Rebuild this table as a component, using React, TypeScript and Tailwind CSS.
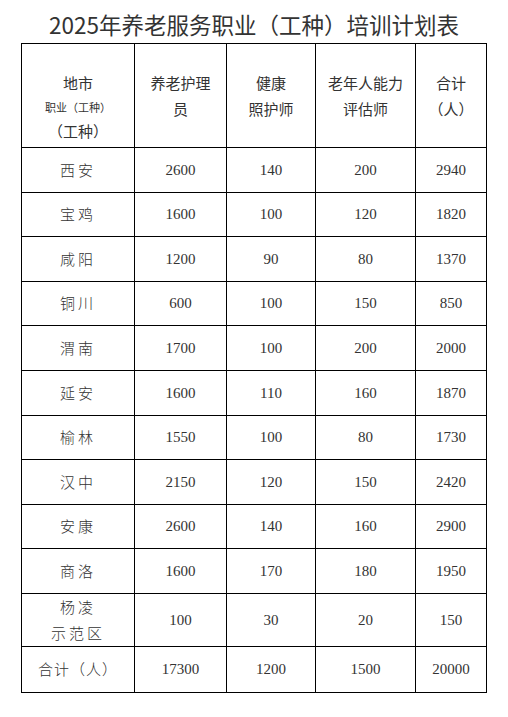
import React from "react";

const rows: [string, string, string, string, string][] = [
  ["西安", "2600", "140", "200", "2940"],
  ["宝鸡", "1600", "100", "120", "1820"],
  ["咸阳", "1200", "90", "80", "1370"],
  ["铜川", "600", "100", "150", "850"],
  ["渭南", "1700", "100", "200", "2000"],
  ["延安", "1600", "110", "160", "1870"],
  ["榆林", "1550", "100", "80", "1730"],
  ["汉中", "2150", "120", "150", "2420"],
  ["安康", "2600", "140", "160", "2900"],
  ["商洛", "1600", "170", "180", "1950"],
];

const serif = "font-['Liberation_Serif','Noto_Sans_CJK_SC',serif]";
const sans = "font-['Noto_Sans_CJK_SC','Noto_Sans',sans-serif]";
const cjk = "font-['Noto_Sans_CJK_SC',sans-serif] font-light";

export default function App() {
  return (
    <div className="w-[508px] h-[717px] bg-white text-[#333]">
      <h1 className={`${sans} text-[22.5px] leading-[34px] text-center pt-[7px] text-[#333]`}>
        2025年养老服务职业（工种）培训计划表
      </h1>
      <table className="mx-auto mt-[2px] w-[465px] table-fixed border-collapse">
        <colgroup>
          <col className="w-[113px]" />
          <col className="w-[92px]" />
          <col className="w-[89px]" />
          <col className="w-[100px]" />
          <col className="w-[71px]" />
        </colgroup>
        <thead>
          <tr className={`${sans} h-[104px] text-[15px] leading-[26px] text-[#333]`}>
            <th className="border-[1.5px] border-black align-top pt-[26px] font-normal">
              <div>地市</div>
              <div className="text-[11px] leading-[22px]">职业（工种）</div>
              <div>（工种）</div>
            </th>
            <th className="border-[1.5px] border-black align-top pt-[26px] font-normal">
              <div>养老护理</div>
              <div>员</div>
            </th>
            <th className="border-[1.5px] border-black align-top pt-[26px] font-normal">
              <div>健康</div>
              <div>照护师</div>
            </th>
            <th className="border-[1.5px] border-black align-top pt-[26px] font-normal">
              <div>老年人能力</div>
              <div>评估师</div>
            </th>
            <th className="border-[1.5px] border-black align-top pt-[26px] font-normal">
              <div>合计</div>
              <div>（人）</div>
            </th>
          </tr>
        </thead>
        <tbody className={`${serif} text-[15px] text-[#333]`}>
          {rows.map((r) => (
            <tr key={r[0]} className="h-[44.6px]">
              <td className={`${cjk} border-[1.5px] border-black text-center tracking-[3px]`}>{r[0]}</td>
              <td className="border-[1.5px] border-black text-center">{r[1]}</td>
              <td className="border-[1.5px] border-black text-center">{r[2]}</td>
              <td className="border-[1.5px] border-black text-center">{r[3]}</td>
              <td className="border-[1.5px] border-black text-center">{r[4]}</td>
            </tr>
          ))}
          <tr className="h-[53px]">
            <td className={`${cjk} border-[1.5px] border-black text-center leading-[26px] tracking-[3px]`}>
              <div>杨凌</div>
              <div>示范区</div>
            </td>
            <td className="border-[1.5px] border-black text-center">100</td>
            <td className="border-[1.5px] border-black text-center">30</td>
            <td className="border-[1.5px] border-black text-center">20</td>
            <td className="border-[1.5px] border-black text-center">150</td>
          </tr>
          <tr className="h-[46px]">
            <td className={`${cjk} border-[1.5px] border-black text-center tracking-[1px]`}>合计（人）</td>
            <td className="border-[1.5px] border-black text-center">17300</td>
            <td className="border-[1.5px] border-black text-center">1200</td>
            <td className="border-[1.5px] border-black text-center">1500</td>
            <td className="border-[1.5px] border-black text-center">20000</td>
          </tr>
        </tbody>
      </table>
    </div>
  );
}
